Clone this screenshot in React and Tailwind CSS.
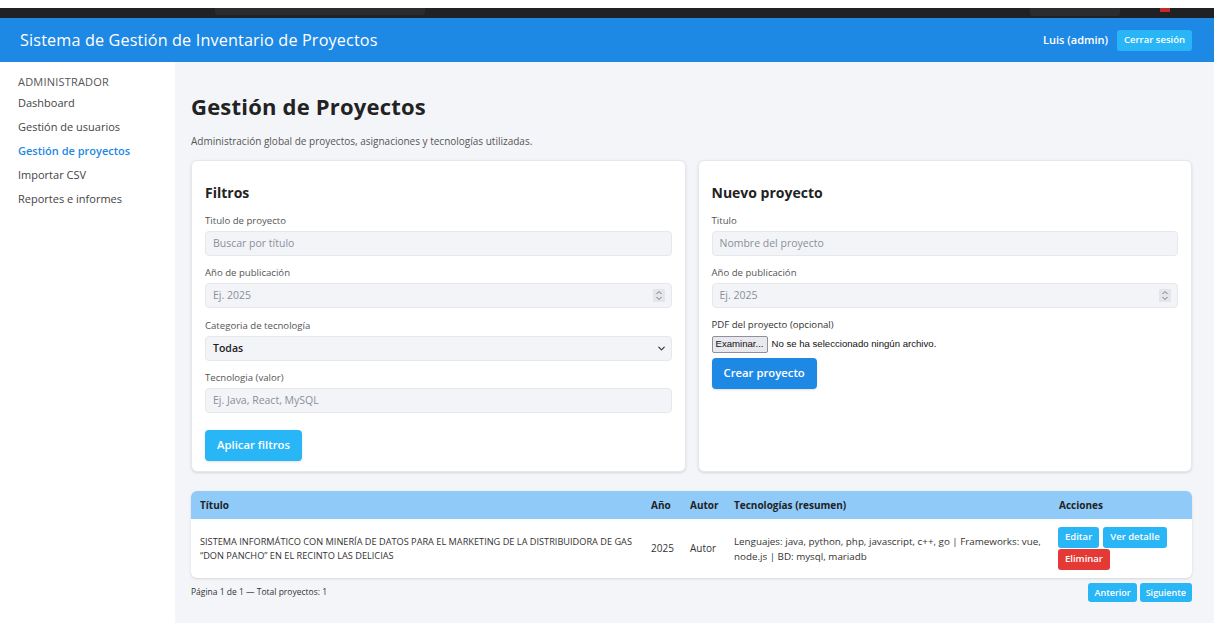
import { ChevronDown } from 'lucide-react';

const menu = ['Dashboard', 'Gestión de usuarios', 'Gestión de proyectos', 'Importar CSV', 'Reportes e informes'];

function Label({ children }) {
    return <div className="text-[9.6px] leading-[14px] text-[#555]">{children}</div>;
}

function Field({ placeholder }) {
    return (
        <div className="mt-[3px] h-[25px] rounded-[4px] border border-[#e6e8ee] bg-[#f3f4f8] px-[7px] flex items-center text-[10.5px] text-[#8a8f98]">
            {placeholder}
        </div>
    );
}

function NumberField({ placeholder }) {
    return (
        <div className="mt-[3px] h-[25px] rounded-[4px] border border-[#e6e8ee] bg-[#f3f4f8] pl-[7px] pr-[6px] flex items-center justify-between text-[10.5px] text-[#8a8f98]">
            <span>{placeholder}</span>
            {/* spinner */}
            <svg width="12" height="13" viewBox="0 0 12 13" className="bg-[#e4e5ea] rounded-[1px]">
                <path d="M3.5 5 L6 2.5 L8.5 5" fill="none" stroke="#777" strokeWidth="1" />
                <path d="M3.5 8 L6 10.5 L8.5 8" fill="none" stroke="#777" strokeWidth="1" />
            </svg>
        </div>
    );
}

export default function App() {
    return (
        <div className="h-[623px] w-[1214px] overflow-hidden flex flex-col bg-white font-['Open_Sans',sans-serif]">
            {/* franja del navegador */}
            <div className="h-[8px] bg-white" />
            <div className="h-[10px] bg-[#202124] flex">
                <div className="ml-[215px] w-[210px] h-[7px] bg-[#2b2c30] rounded-b-[3px]" />
                <div className="flex-1" />
                <div className="w-[90px] h-[8px] bg-[#2b2c30] rounded-b-[3px] mr-[40px]" />
                <div className="w-[10px] h-[4px] bg-[#c62828] mr-[44px]" />
            </div>

            {/* barra superior */}
            <header className="h-[44px] bg-[#1e88e5] flex items-center justify-between pl-[20px] pr-[22px]">
                <div className="text-white text-[16.2px] font-medium tracking-[0.15px]">Sistema de Gestión de Inventario de Proyectos</div>
                <div className="flex items-center gap-[9px]">
                    <span className="text-white text-[11px] font-semibold">Luis (admin)</span>
                    <button className="h-[21px] px-[7px] rounded-[3px] bg-[#29b6f6] text-white text-[9.5px] font-semibold">Cerrar sesión</button>
                </div>
            </header>

            <div className="flex-1 flex min-h-0">
                {/* menú lateral */}
                <aside className="w-[175px] bg-white pl-[18px] pt-[13px]">
                    <div className="text-[11px] leading-[14px] text-[#555] tracking-[0.2px]">ADMINISTRADOR</div>
                    <nav className="mt-[2px] flex flex-col">
                        {menu.map((m) => (
                            <div
                                key={m}
                                className={`h-[24px] flex items-center text-[11px] ${m === 'Gestión de proyectos' ? 'text-[#1e88e5] font-semibold' : 'text-[#444]'}`}
                            >
                                {m}
                            </div>
                        ))}
                    </nav>
                </aside>

                {/* contenido */}
                <main className="flex-1 bg-[#f4f5f9] pl-[16px] pr-[22px] pt-[30px]">
                    <h1 className="text-[22px] leading-[28px] font-bold text-[#222] tracking-[0.2px]">Gestión de Proyectos</h1>
                    <p className="mt-[13px] text-[10px] leading-[16px] text-[#555]">
                        Administración global de proyectos, asignaciones y tecnologías utilizadas.
                    </p>

                    <div className="mt-[11px] grid grid-cols-2 gap-[12px]">
                        {/* filtros */}
                        <section className="bg-white rounded-[6px] border border-[#e6e8ee] shadow-sm px-[13px] pt-[22px] pb-[10px]">
                            <h2 className="text-[14px] leading-[20px] font-bold text-[#222]">Filtros</h2>
                            <div className="mt-[11px]"><Label>Titulo de proyecto</Label></div>
                            <Field placeholder="Buscar por título" />
                            <div className="mt-[10px]"><Label>Año de publicación</Label></div>
                            <NumberField placeholder="Ej. 2025" />
                            <div className="mt-[11px]"><Label>Categoria de tecnología</Label></div>
                            <div className="mt-[3px] h-[25px] rounded-[4px] border border-[#e6e8ee] bg-[#f3f4f8] pl-[7px] pr-[4px] flex items-center justify-between text-[10.5px] font-semibold text-[#222]">
                                <span>Todas</span>
                                <ChevronDown className="w-[11px] h-[11px] text-[#333]" strokeWidth={2.5} />
                            </div>
                            <div className="mt-[10px]"><Label>Tecnologia (valor)</Label></div>
                            <Field placeholder="Ej. Java, React, MySQL" />
                            <button className="mt-[17px] h-[31px] px-[12px] rounded-[4px] bg-[#29b6f6] text-white text-[11.3px] font-semibold shadow-sm">
                                Aplicar filtros
                            </button>
                        </section>

                        {/* alta de proyecto */}
                        <section className="bg-white rounded-[6px] border border-[#e6e8ee] shadow-sm px-[13px] pt-[22px] pb-[10px]">
                            <h2 className="text-[14px] leading-[20px] font-bold text-[#222]">Nuevo proyecto</h2>
                            <div className="mt-[11px]"><Label>Titulo</Label></div>
                            <Field placeholder="Nombre del proyecto" />
                            <div className="mt-[10px]"><Label>Año de publicación</Label></div>
                            <NumberField placeholder="Ej. 2025" />
                            <div className="mt-[10px] text-[9.6px] leading-[14px] text-[#333]">PDF del proyecto (opcional)</div>
                            <div className="mt-[4px] flex items-center gap-[4px] font-['Liberation_Sans',sans-serif] text-[9.6px] text-[#111]">
                                <span className="h-[17px] px-[3px] flex items-center border border-[#8f8f9d] rounded-[2px] bg-[#e9e9ed]">Examinar...</span>
                                <span>No se ha seleccionado ningún archivo.</span>
                            </div>
                            <button className="mt-[5px] h-[31px] px-[12px] rounded-[4px] bg-[#1e88e5] text-white text-[11.3px] font-semibold shadow-sm">
                                Crear proyecto
                            </button>
                        </section>
                    </div>

                    {/* listado */}
                    <div className="mt-[19px] rounded-[6px] overflow-hidden bg-white shadow-sm">
                        <table className="w-full table-fixed border-collapse">
                            <colgroup>
                                <col className="w-[451px]" />
                                <col className="w-[39px]" />
                                <col className="w-[44px]" />
                                <col className="w-[325px]" />
                                <col />
                            </colgroup>
                            <thead>
                                <tr className="h-[28px] bg-[#90caf9] text-left text-[10px] font-bold text-[#222]">
                                    <th className="px-[9px] font-bold">Título</th>
                                    <th className="px-[9px] font-bold">Año</th>
                                    <th className="px-[9px] font-bold">Autor</th>
                                    <th className="px-[9px] font-bold">Tecnologías (resumen)</th>
                                    <th className="px-[9px] font-bold">Acciones</th>
                                </tr>
                            </thead>
                            <tbody>
                                <tr className="h-[59px] text-[#333] align-middle">
                                    <td className="px-[9px] text-[9.2px] leading-[14px]">
                                        SISTEMA INFORMÁTICO CON MINERÍA DE DATOS PARA EL MARKETING DE LA DISTRIBUIDORA DE GAS “DON PANCHO” EN EL RECINTO LAS DELICIAS
                                    </td>
                                    <td className="px-[9px] text-[10px]">2025</td>
                                    <td className="px-[9px] text-[10px]">Autor</td>
                                    <td className="px-[9px] text-[9.8px] leading-[15px]">
                                        Lenguajes: java, python, php, javascript, c++, go | Frameworks: vue, node.js | BD: mysql, mariadb
                                    </td>
                                    <td className="px-[8px] py-[8px]">
                                        <div className="flex flex-wrap gap-x-[4px] gap-y-[1px]">
                                            <span className="h-[21px] px-[7px] rounded-[3px] bg-[#29b6f6] text-white text-[9.5px] font-semibold flex items-center">Editar</span>
                                            <span className="h-[21px] px-[7px] rounded-[3px] bg-[#29b6f6] text-white text-[9.5px] font-semibold flex items-center">Ver detalle</span>
                                            <span className="h-[21px] px-[7px] rounded-[3px] bg-[#e53935] text-white text-[9.5px] font-semibold flex items-center">Eliminar</span>
                                        </div>
                                    </td>
                                </tr>
                            </tbody>
                        </table>
                    </div>

                    <div className="mt-[5px] flex items-center justify-between">
                        <span className="text-[8.5px] text-[#333]">Página 1 de 1 — Total proyectos: 1</span>
                        <div className="flex gap-[3px]">
                            <span className="h-[19px] px-[6px] rounded-[3px] bg-[#29b6f6] text-white text-[9px] font-semibold flex items-center">Anterior</span>
                            <span className="h-[19px] px-[6px] rounded-[3px] bg-[#29b6f6] text-white text-[9px] font-semibold flex items-center">Siguiente</span>
                        </div>
                    </div>
                </main>
            </div>
        </div>
    );
}
